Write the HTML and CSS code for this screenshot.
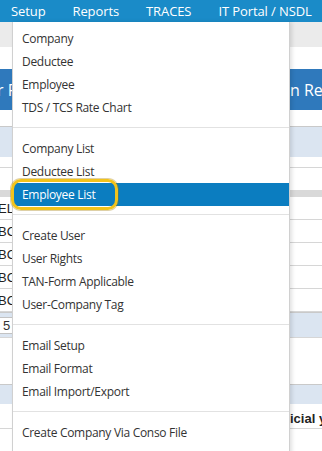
FILE: index.html
```html
<!DOCTYPE html>
<html>
<head>
    <title>TDS Setup Menu</title>
    <meta charset="UTF-8">
    <meta name="viewport" content="width=device-width, initial-scale=1.0">
    <link rel="stylesheet" href="styles.css">
</head>
<body>
    <nav class="topbar">
        <span class="nav-item">Setup</span>
        <span class="nav-item">Reports</span>
        <span class="nav-item">TRACES</span>
        <span class="nav-item">IT Portal / NSDL</span>
    </nav>

    <div class="page">
        <div class="row row-head"></div>
        <div class="row row-white h22"></div>
        <div class="row row-banner">
            <span class="banner-left">r F</span>
            <span class="banner-right">n Ret</span>
        </div>
        <div class="row row-white h16"></div>
        <div class="row row-band h31"></div>
        <div class="row row-white h11 line"></div>
        <div class="row row-white h22"></div>
        <div class="row row-grey"></div>
        <div class="row cell line"><span class="cell-left">ELS</span></div>
        <div class="row cell line"><span class="cell-left">BC</span></div>
        <div class="row cell line"><span class="cell-left">BC</span></div>
        <div class="row cell line"><span class="cell-left">BC</span></div>
        <div class="row cell line"><span class="cell-left">BC</span></div>
        <div class="row row-band h26 line"><span class="cell-left input">5</span></div>
        <div class="row row-white h46"></div>
        <div class="row row-band h20"></div>
        <div class="row cell tall line"><span class="cell-right bold">icial ye</span></div>
        <div class="row row-white h24"></div>
    </div>

    <ul class="dropdown">
        <li class="menu-item">Company</li>
        <li class="menu-item">Deductee</li>
        <li class="menu-item">Employee</li>
        <li class="menu-item">TDS / TCS Rate Chart</li>
        <li class="divider"></li>
        <li class="menu-item">Company List</li>
        <li class="menu-item">Deductee List</li>
        <li class="menu-item active">Employee List</li>
        <li class="divider"></li>
        <li class="menu-item">Create User</li>
        <li class="menu-item">User Rights</li>
        <li class="menu-item">TAN-Form Applicable</li>
        <li class="menu-item">User-Company Tag</li>
        <li class="divider"></li>
        <li class="menu-item">Email Setup</li>
        <li class="menu-item">Email Format</li>
        <li class="menu-item">Email Import/Export</li>
        <li class="divider"></li>
        <li class="menu-item">Create Company Via Conso File</li>
    </ul>

    <!-- highlight ring drawn over the active item -->
    <div class="marker"></div>
</body>
</html>
```

FILE: styles.css
```css
:root {
    --bar-blue: #1a8bc8;
    --active-blue: #0b7dc0;
    --banner-blue: #2f79bc;
    --band-blue: #dbe5f1;
    --text: #333333;
    --line: #e2e2e2;
    --marker: #f2c31b;
}

* {
    margin: 0;
    padding: 0;
    box-sizing: border-box;
}

body {
    font-family: 'Open Sans', 'Noto Sans', sans-serif;
    background: #ffffff;
    color: var(--text);
    width: 322px;
    height: 451px;
    overflow: hidden;
    position: relative;
}

.topbar {
    height: 22px;
    background: var(--bar-blue);
    display: flex;
    align-items: center;
    padding-left: 11px;
    gap: 27px;
    white-space: nowrap;
}

.nav-item {
    color: #ffffff;
    font-size: 13px;
    letter-spacing: -0.1px;
    line-height: 22px;
}

/* page behind the menu */
.page {
    display: flex;
    flex-direction: column;
}

.row {
    display: flex;
    align-items: center;
    justify-content: space-between;
    white-space: nowrap;
    overflow: hidden;
}

.row-head {
    height: 25px;
    background: #ebebeb;
}

.row-white { background: #ffffff; }
.h11 { height: 11px; }
.h16 { height: 16px; }
.h20 { height: 20px; }
.h22 { height: 22px; }
.h24 { height: 24px; }
.h26 { height: 26px; }
.h31 { height: 31px; }
.h46 { height: 46px; }

.row-banner {
    height: 41px;
    background: var(--banner-blue);
    color: #ffffff;
    font-size: 16px;
}

.banner-left { margin-left: -3px; }

.banner-right {
    width: 32px;
    flex-shrink: 0;
}

.row-band {
    background: var(--band-blue);
    border-top: 1px solid #c9c9c9;
}

.row-grey {
    height: 7px;
    background: #d9d9d9;
}

.line { border-bottom: 1px solid #d6d6d6; }

.cell {
    height: 23px;
    font-size: 13px;
    font-family: 'Liberation Sans', sans-serif;
    color: #222222;
}

.cell.tall {
    height: 25px;
    padding-top: 5px;
}

.cell-left { margin-left: -2px; }

.cell-right {
    margin-left: auto;
    width: 32px;
    flex-shrink: 0;
}

.bold { font-weight: bold; }

.input {
    background: #ffffff;
    border: 1px solid #c3c3c3;
    padding: 0 4px;
    font-family: 'Liberation Sans', sans-serif;
    font-size: 13px;
}

/* dropdown menu */
.dropdown {
    position: absolute;
    top: 22px;
    left: 12px;
    width: 278px;
    list-style: none;
    background: #ffffff;
    border: 1px solid #d0d0d0;
    border-top: none;
    box-shadow: 2px 0 4px rgba(0, 0, 0, 0.12);
    padding-top: 5px;
    height: 440px;
}

.menu-item {
    height: 23px;
    line-height: 23px;
    padding-left: 9px;
    font-size: 12px;
    letter-spacing: -0.3px;
    color: var(--text);
    white-space: nowrap;
}

.menu-item.active {
    background: var(--active-blue);
    color: #ffffff;
}

.divider {
    height: 1px;
    background: var(--line);
    margin: 8px 0 9px;
}

.marker {
    position: absolute;
    left: 11px;
    top: 179px;
    width: 107px;
    height: 31px;
    border: 3px solid var(--marker);
    border-radius: 10px;
    box-shadow: 0 0 0 1px rgba(160, 120, 0, 0.35);
}
```
